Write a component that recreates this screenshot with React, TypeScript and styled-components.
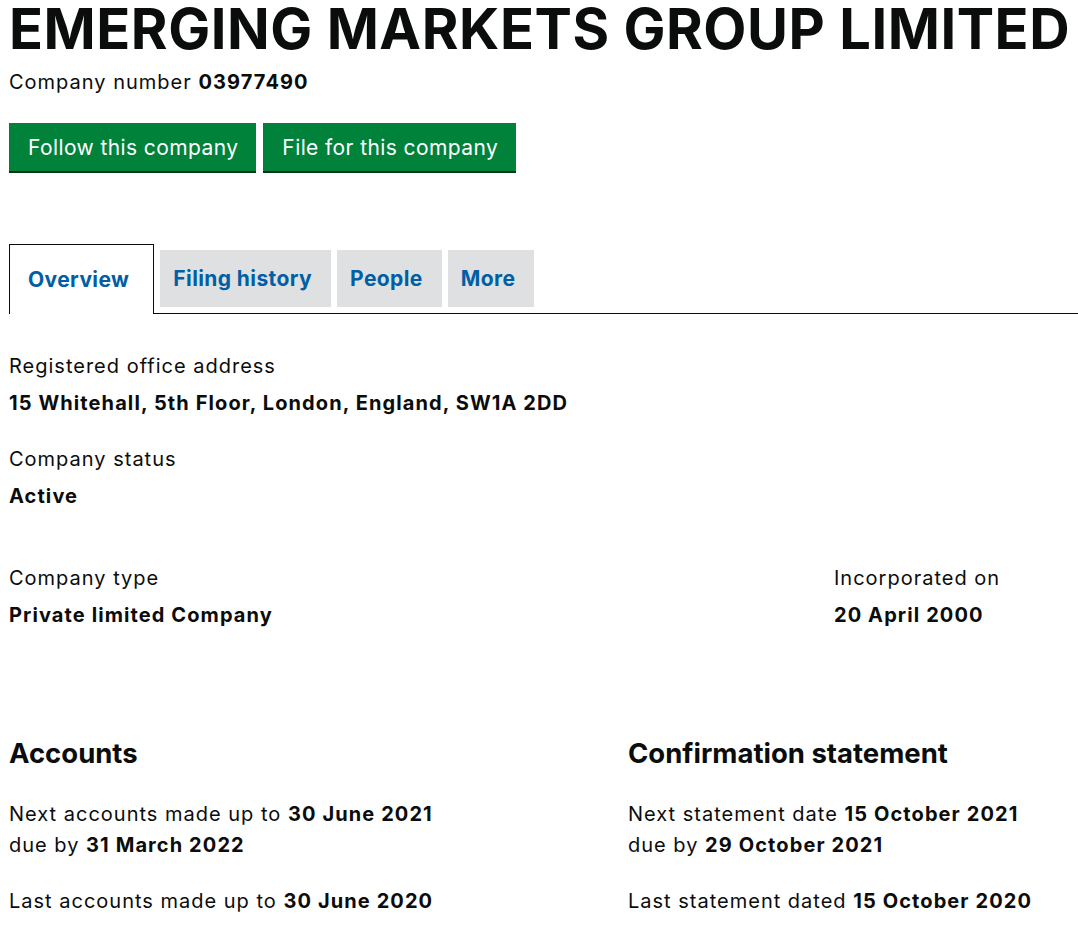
import React from "react";
import styled, { createGlobalStyle } from "styled-components";

const GlobalStyle = createGlobalStyle`
  html, body {
    margin: 0;
    padding: 0;
    background: #ffffff;
  }
  body {
    font-family: Inter, "Liberation Sans", Arial, sans-serif;
    color: #0b0c0c;
    overflow: hidden;
  }
`;

const Page = styled.div`
  padding: 0 0 0 9px;
  width: 1078px;
  box-sizing: border-box;
`;

const Title = styled.h1`
  margin: 0;
  font-size: 56px;
  line-height: 58px;
  font-weight: 700;
  letter-spacing: 0.55px;
  white-space: nowrap;
`;

const Strong = styled.strong`
  font-weight: 700;
  letter-spacing: 1.1px;
`;

const CompanyNumber = styled.p`
  margin: 12px 0 0;
  font-size: 20px;
  line-height: 24px;
  letter-spacing: 1px;
`;

const ButtonRow = styled.div`
  display: flex;
  gap: 7px;
  margin-top: 29px;
`;

const GreenButton = styled.a`
  display: inline-flex;
  align-items: center;
  height: 48px;
  padding: 0 18px 0 19px;
  background: #00823b;
  color: #ffffff;
  font-size: 21px;
  letter-spacing: 0.4px;
  text-decoration: none;
  box-shadow: 0 2px 0 #003618;
`;

const TabList = styled.ul`
  display: flex;
  align-items: flex-end;
  list-style: none;
  margin: 73px 0 0;
  padding: 0;
  border-bottom: 1px solid #0b0c0c;
  gap: 6px;
`;

const Tab = styled.li<{ $active?: boolean }>`
  display: flex;
  align-items: center;
  box-sizing: border-box;
  font-size: 21px;
  font-weight: 700;
  letter-spacing: 0.4px;
  color: #005ea5;
  padding: ${(p) => (p.$active ? "0 24px 0 18px" : "0 19px 0 13px")};
  height: ${(p) => (p.$active ? "70px" : "57px")};
  margin-bottom: ${(p) => (p.$active ? "-1px" : "6px")};
  background: ${(p) => (p.$active ? "#ffffff" : "#dee0e2")};
  border: ${(p) => (p.$active ? "1px solid #0b0c0c" : "none")};
  border-bottom: none;
`;

const Field = styled.div<{ $gap?: number }>`
  margin-top: ${(p) => p.$gap ?? 0}px;
`;

const Label = styled.div`
  font-size: 20px;
  line-height: 24px;
  letter-spacing: 1px;
`;

const Value = styled.div`
  font-size: 20px;
  line-height: 24px;
  font-weight: 700;
  letter-spacing: 1.1px;
  margin-top: 13px;
`;

const Row = styled.div<{ $cols: string; $gap: number }>`
  display: grid;
  grid-template-columns: ${(p) => p.$cols};
  margin-top: ${(p) => p.$gap}px;
`;

const SectionHeading = styled.h2`
  margin: 0;
  font-size: 27.5px;
  line-height: 30px;
  font-weight: 700;
`;

const Para = styled.p<{ $gap: number }>`
  margin: ${(p) => p.$gap}px 0 0;
  font-size: 20px;
  line-height: 31px;
  letter-spacing: 1px;
`;

export default function App() {
  return (
    <>
      <GlobalStyle />
      <Page>
        <Title>EMERGING MARKETS GROUP LIMITED</Title>
        <CompanyNumber>
          Company number <Strong>03977490</Strong>
        </CompanyNumber>
        <ButtonRow>
          <GreenButton>Follow this company</GreenButton>
          <GreenButton>File for this company</GreenButton>
        </ButtonRow>

        <TabList>
          <Tab $active>Overview</Tab>
          <Tab>Filing history</Tab>
          <Tab>People</Tab>
          <Tab>More</Tab>
        </TabList>

        <Field $gap={40}>
          <Label>Registered office address</Label>
          <Value>15 Whitehall, 5th Floor, London, England, SW1A 2DD</Value>
        </Field>
        <Field $gap={32}>
          <Label>Company status</Label>
          <Value>Active</Value>
        </Field>

        <Row $cols="825px 1fr" $gap={58}>
          <Field>
            <Label>Company type</Label>
            <Value>Private limited Company</Value>
          </Field>
          <Field>
            <Label>Incorporated on</Label>
            <Value>20 April 2000</Value>
          </Field>
        </Row>

        <Row $cols="619px 1fr" $gap={111}>
          <div>
            <SectionHeading>Accounts</SectionHeading>
            <Para $gap={31}>
              Next accounts made up to <Strong>30 June 2021</Strong>
              <br />
              due by <Strong>31 March 2022</Strong>
            </Para>
            <Para $gap={25}>
              Last accounts made up to <Strong>30 June 2020</Strong>
            </Para>
          </div>
          <div>
            <SectionHeading>Confirmation statement</SectionHeading>
            <Para $gap={31}>
              Next statement date <Strong>15 October 2021</Strong>
              <br />
              due by <Strong>29 October 2021</Strong>
            </Para>
            <Para $gap={25}>
              Last statement dated <Strong>15 October 2020</Strong>
            </Para>
          </div>
        </Row>
      </Page>
    </>
  );
}
